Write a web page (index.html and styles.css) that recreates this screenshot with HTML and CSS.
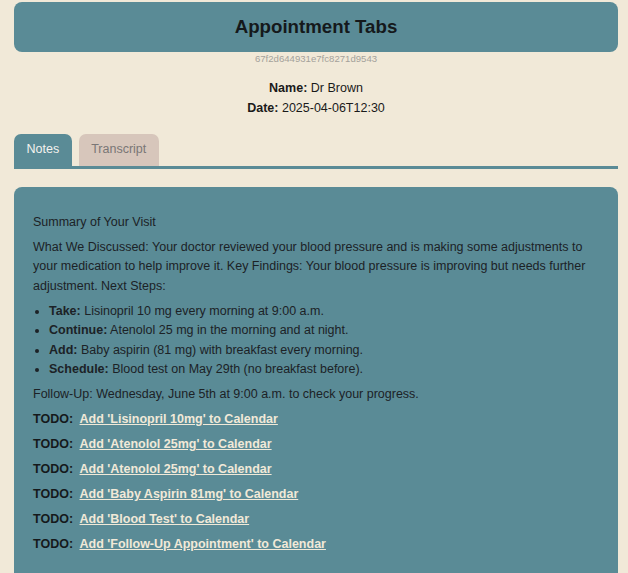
FILE: index.html
```html
<!DOCTYPE html>
<html lang="en">
<head>
<meta charset="utf-8">
<title>Appointment Tabs</title>
<link rel="stylesheet" href="styles.css">
</head>
<body>
<div class="app">
  <header class="header">
    <h3 class="title">Appointment Tabs</h3>
  </header>
  <div class="appt-id">67f2d644931e7fc8271d9543</div>
  <div class="meta">
    <div><b>Name:</b> Dr Brown</div>
    <div><b>Date:</b> 2025-04-06T12:30</div>
  </div>
  <nav class="tabs">
    <div class="tab active">Notes</div>
    <div class="tab">Transcript</div>
  </nav>
  <section class="panel">
    <p>Summary of Your Visit</p>
    <p>What We Discussed: Your doctor reviewed your blood pressure and is making some adjustments to your medication to help improve it. Key Findings: Your blood pressure is improving but needs further adjustment. Next Steps:</p>
    <ul class="steps">
      <li><b>Take:</b> Lisinopril 10 mg every morning at 9:00 a.m.</li>
      <li><b>Continue:</b> Atenolol 25 mg in the morning and at night.</li>
      <li><b>Add:</b> Baby aspirin (81 mg) with breakfast every morning.</li>
      <li><b>Schedule:</b> Blood test on May 29th (no breakfast before).</li>
    </ul>
    <p>Follow-Up: Wednesday, June 5th at 9:00 a.m. to check your progress.</p>
    <p class="todo"><b>TODO:</b> <a href="#">Add 'Lisinopril 10mg' to Calendar</a></p>
    <p class="todo"><b>TODO:</b> <a href="#">Add 'Atenolol 25mg' to Calendar</a></p>
    <p class="todo"><b>TODO:</b> <a href="#">Add 'Atenolol 25mg' to Calendar</a></p>
    <p class="todo"><b>TODO:</b> <a href="#">Add 'Baby Aspirin 81mg' to Calendar</a></p>
    <p class="todo"><b>TODO:</b> <a href="#">Add 'Blood Test' to Calendar</a></p>
    <p class="todo"><b>TODO:</b> <a href="#">Add 'Follow-Up Appointment' to Calendar</a></p>
  </section>
</div>
</body>
</html>
```
FILE: styles.css
```css
html, body {
  margin: 0;
  padding: 0;
  background: #f1e9d8;
}
body {
  font-family: "Liberation Sans", Arial, sans-serif;
  font-size: 12.5px;
  line-height: 19.5px;
  color: #1c2226;
}
.app {
  padding: 2px 10px 0 14px;
}
.header {
  background: #5a8b96;
  border-radius: 8px;
  padding: 14px 0;
  text-align: center;
}
.title {
  margin: 0;
  font-size: 18.7px;
  line-height: 22px;
  font-weight: bold;
  color: #15191b;
}
.appt-id {
  text-align: center;
  font-size: 9.6px;
  line-height: 13px;
  color: #a4a19b;
}
.meta {
  margin-top: 14px;
  text-align: center;
  color: #1a1a1a;
}
.tabs {
  display: flex;
  gap: 7px;
  margin-top: 16px;
  border-bottom: 3px solid #5a8b96;
}
.tab {
  height: 32px;
  display: flex;
  align-items: center;
  padding: 0 12.5px;
  border-radius: 7px 7px 0 0;
  background: #d7c6bb;
  color: #7a7676;
}
.tab.active {
  background: #5a8b96;
  color: #f4f2ee;
}
.panel {
  margin-top: 18px;
  background: #5a8b96;
  border-radius: 8px;
  padding: 20px 20px 24px 19px;
  min-height: 400px;
}
.panel p {
  margin: 5.5px 0;
}
.steps {
  margin: 5.5px 0;
  padding-left: 16px;
}
.todo b {
  color: #15191b;
  margin-right: 3px;
}
.todo a {
  color: #f1e9d8;
  font-weight: bold;
  text-decoration: underline;
}
```
